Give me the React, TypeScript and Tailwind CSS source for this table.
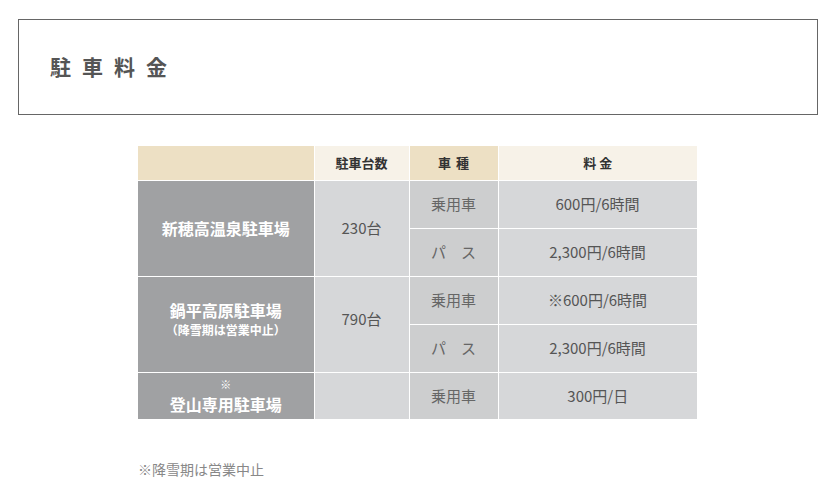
import React from 'react';

const font = { fontFamily: '"Noto Sans CJK JP", "Noto Sans", sans-serif' };

const Row = ({ type, price }: { type: string; price: string }) => (
  <>
    <td className="bg-[#cdcecf] text-[#666] text-[15px] text-center border border-white">{type}</td>
    <td className="bg-[#d6d7d9] text-[#555] text-[15px] text-center border border-white">{price}</td>
  </>
);

export default function App() {
  return (
    <div className="w-[837px] h-[499px] bg-white pt-[19px] pl-[18px]" style={font}>
      <div className="w-[800px]">
        {/* Title box */}
        <div className="h-[96px] border border-[#666] flex items-center pl-[31px]">
          <h2 className="text-[21px] font-bold text-[#555] tracking-[11px]">駐車料金</h2>
        </div>

        {/* Price table */}
        <table className="ml-[120px] mt-[31px] border-collapse table-fixed w-[559px]">
          <colgroup>
            <col className="w-[176px]" />
            <col className="w-[95px]" />
            <col className="w-[89px]" />
            <col className="w-[199px]" />
          </colgroup>
          <thead>
            <tr className="h-[34px] text-[13px] font-bold text-[#333]">
              <th className="bg-[#ede0c4] border border-white border-t-0 border-l-0"></th>
              <th className="bg-[#f7f2e8] border border-white border-t-0 font-bold">駐車台数</th>
              <th className="bg-[#ede0c4] border border-white border-t-0 font-bold tracking-[5px] pl-[5px]">車種</th>
              <th className="bg-[#f7f2e8] border border-white border-t-0 border-r-0 font-bold tracking-[3px] pl-[3px]">料金</th>
            </tr>
          </thead>
          <tbody>
            <tr className="h-[48px]">
              <td rowSpan={2} className="bg-[#a0a1a3] text-white font-bold text-[16px] text-center border border-white border-l-0">
                新穂高温泉駐車場
              </td>
              <td rowSpan={2} className="bg-[#d6d7d9] text-[#555] text-[15px] text-center border border-white">
                230台
              </td>
              <Row type="乗用車" price="600円/6時間" />
            </tr>
            <tr className="h-[48px]">
              <Row type="パ　ス" price="2,300円/6時間" />
            </tr>
            <tr className="h-[48px]">
              <td rowSpan={2} className="bg-[#a0a1a3] text-white font-bold text-center border border-white border-l-0 align-middle pb-[10px]">
                <div className="text-[16px] leading-[22px]">鍋平高原駐車場</div>
                <div className="text-[12px] leading-[18px]">（降雪期は営業中止）</div>
              </td>
              <td rowSpan={2} className="bg-[#d6d7d9] text-[#555] text-[15px] text-center border border-white pb-[10px]">
                790台
              </td>
              <Row type="乗用車" price="※600円/6時間" />
            </tr>
            <tr className="h-[48px]">
              <Row type="パ　ス" price="2,300円/6時間" />
            </tr>
            <tr className="h-[47px]">
              <td className="bg-[#a0a1a3] text-white font-bold text-center border border-white border-l-0 border-b-0">
                <div className="text-[11px] leading-[16px] font-normal">※</div>
                <div className="text-[16px] leading-[24px]">登山専用駐車場</div>
              </td>
              <td className="bg-[#d6d7d9] border border-white border-b-0"></td>
              <td className="bg-[#cdcecf] text-[#666] text-[15px] text-center border border-white border-b-0">乗用車</td>
              <td className="bg-[#d6d7d9] text-[#555] text-[15px] text-center border border-white border-b-0 border-r-0">300円/日</td>
            </tr>
          </tbody>
        </table>

        {/* Note */}
        <p className="ml-[120px] mt-[40px] text-[14px] text-[#888]">※降雪期は営業中止</p>
      </div>
    </div>
  );
}
